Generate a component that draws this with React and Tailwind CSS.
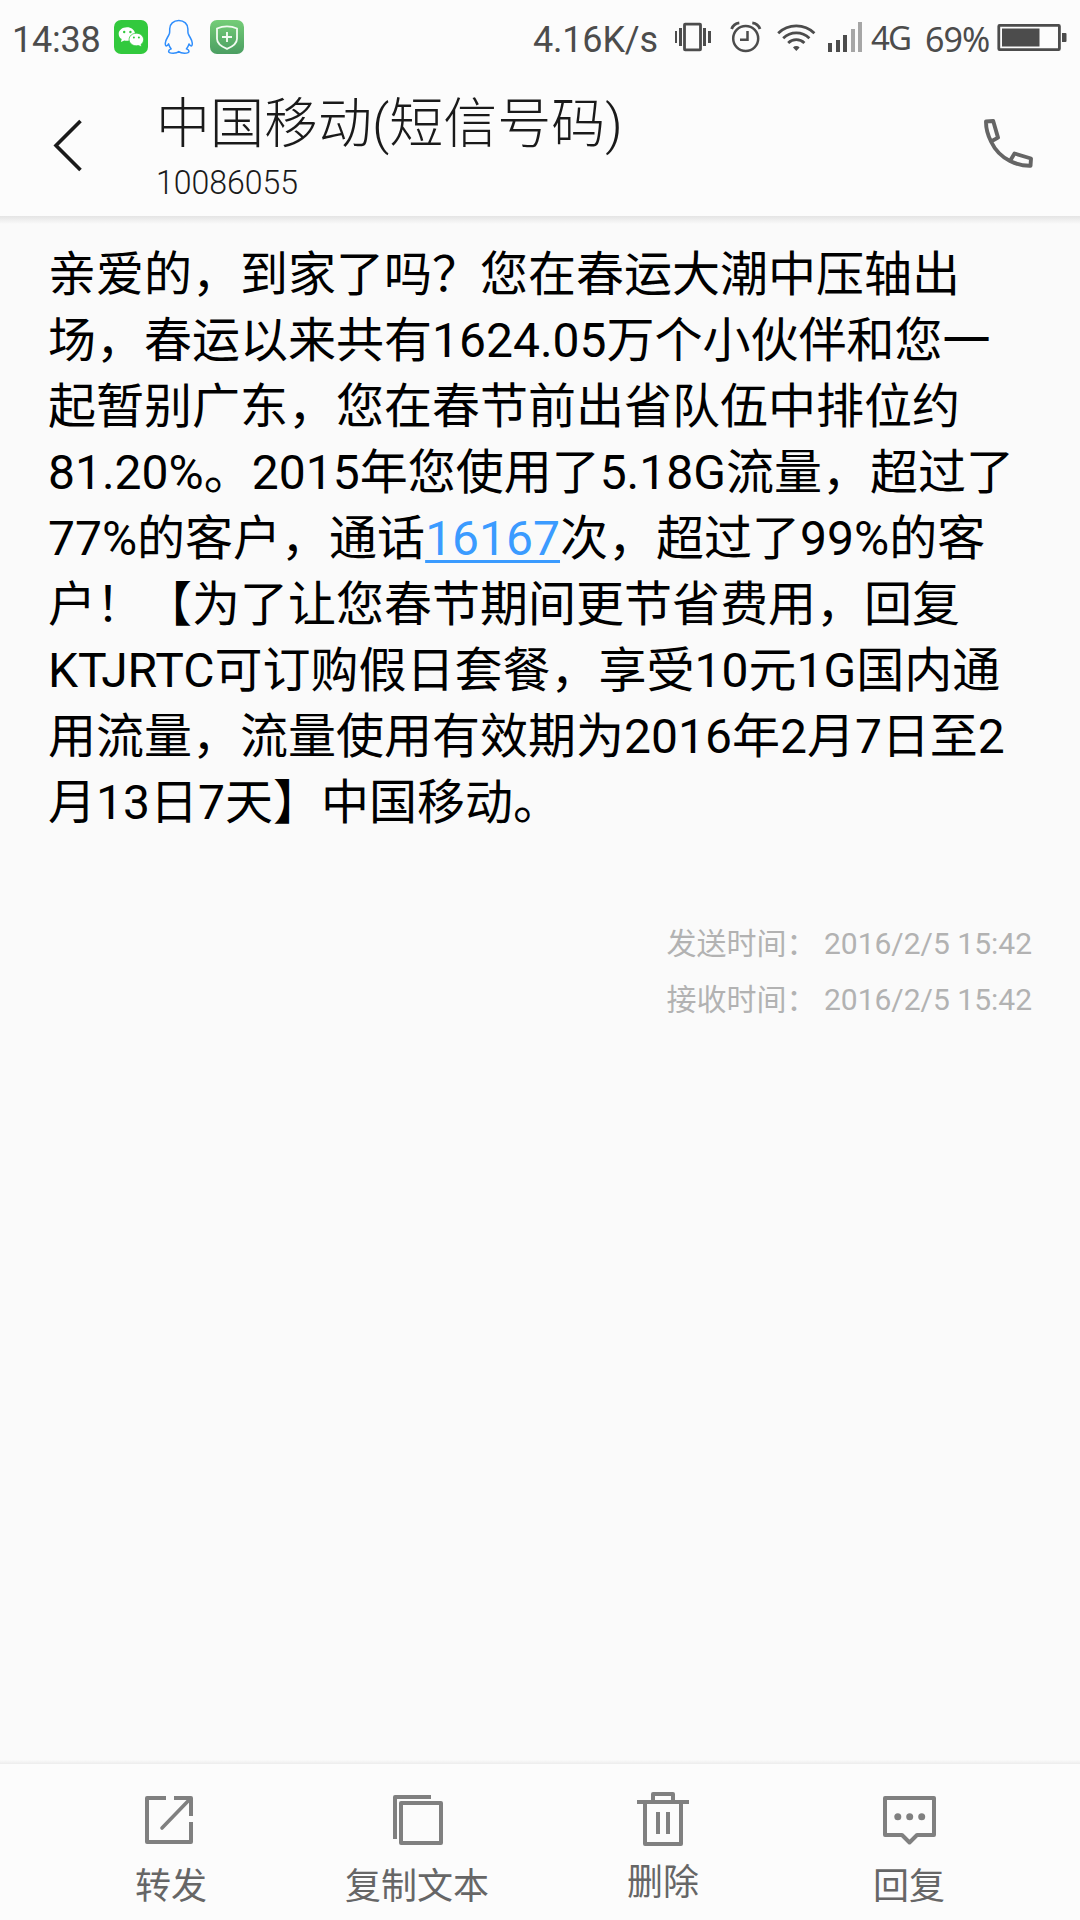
const messageLines = [
  ["亲爱的，到家了吗？您在春运大潮中压轴出"],
  ["场，春运以来共有1624.05万个小伙伴和您一"],
  ["起暂别广东，您在春节前出省队伍中排位约"],
  ["81.20%。2015年您使用了5.18G流量，超过了"],
  ["77%的客户，通话", "16167", "次，超过了99%的客"],
  ["户！【为了让您春节期间更节省费用，回复"],
  ["KTJRTC可订购假日套餐，享受10元1G国内通"],
  ["用流量，流量使用有效期为2016年2月7日至2"],
  ["月13日7天】中国移动。"],
];

function StatusBar() {
  return (
    <div className="flex h-[75px] shrink-0 items-start text-[36px] leading-[42px] text-[#4c4c4c]">
      <span className="ml-[12px] mt-[19px] w-[102px] whitespace-nowrap tracking-[-0.2px]">14:38</span>

      <svg className="mt-[20px] h-[34px] w-[34px]" viewBox="0 0 34 34">
        <rect width="34" height="34" rx="7" fill="#32c93d" />
        <path d="M13 7.2c-4.700 0-8.300 2.900-8.300 6.700 0 2.100 1.100 3.900 3 5.200l-.8 2.900 3.400-1.600c.9.200 1.800.3 2.700.3h1c1.200.8 7-5 7.100-7.200C20.600 9.900 17.200 7.200 13 7.200z" fill="#fff" />
        <path d="M22.300 13.200c-4 0-7.200 2.800-7.200 6.300s3.200 6.300 7.200 6.300c.8 0 1.500-.1 2.200-.3l3.200 1.600-.7-2.600c1.700-1.200 2.600-3 2.600-5 0-3.500-3.300-6.300-7.300-6.300z" fill="#fff" stroke="#32c93d" strokeWidth=".8" />
        <g fill="#32c93d">
          <circle cx="10.200" cy="12" r="1.200" />
          <circle cx="16.400" cy="12" r="1.200" />
          <circle cx="19.900" cy="17.600" r="1" />
          <circle cx="24.900" cy="17.600" r="1" />
        </g>
      </svg>

      <svg className="ml-[16px] mt-[19px] h-[36px] w-[30px]" viewBox="0 0 30 36" fill="none" stroke="#2f8efc" strokeWidth="1.500" strokeLinejoin="round">
        <path d="M14.800 1.600C9.500 1.600 5.700 5 5.700 10c0 1.600.1 3-.2 4.200C4.400 18 1.300 20.500 1.300 24.200c0 1.600.5 2.700 1.100 2.700 .7 0 1.500-.8 2.200-2 .5 2 1.400 3.600 2.600 5-1.500.5-2.600 1.300-2.600 2.300 0 1.500 2 2 4.600 2 2.400 0 4.500-.6 5.600-1.600 1.100 1 3.200 1.600 5.600 1.600 2.600 0 4.600-.5 4.600-2 0-1-1.100-1.800-2.600-2.300 1.200-1.400 2.100-3 2.600-5 .7 1.200 1.500 2 2.200 2 .6 0 1.100-1.100 1.100-2.700 0-3.700-3.100-6.200-4.200-10-.3-1.200-.2-2.600-.2-4.200 0-5-3.800-8.400-9.100-8.400z" />
      </svg>

      <svg className="ml-[16px] mt-[20px] h-[34px] w-[34px]" viewBox="0 0 34 34" fill="none">
        <defs>
          <linearGradient id="guard" x1="0" y1="0" x2="0" y2="1">
            <stop offset="0" stopColor="#74cd77" />
            <stop offset="1" stopColor="#4b9e62" />
          </linearGradient>
        </defs>
        <rect width="34" height="34" rx="7" fill="url(#guard)" />
        <path d="M17 6.300c3.400 0 7 .8 10 2.200v10.200c0 4.700-4 7.700-10 10.200-6-2.500-10-5.500-10-10.200V8.500c3-1.400 6.600-2.200 10-2.200z" stroke="#f2fbf2" strokeWidth="1.800" />
        <path d="M17 12v10M12 17h10" stroke="#f2fbf2" strokeWidth="1.900" />
      </svg>

      <span className="ml-[289px] mt-[19px] w-[141px] whitespace-nowrap tracking-[-0.2px]">4.16K/s</span>

      <svg className="mt-[22px] h-[30px] w-[38px]" viewBox="0 0 38 30" fill="#4c4c4c">
        <path d="M1 9h2v12H1zM5 6h3v18H5zM29 6h3v18h-3zM34 9h3v12h-3z" />
        <rect x="10.500" y="2.200" width="16" height="25.600" fill="none" stroke="#4c4c4c" strokeWidth="2.800" rx=".6" />
      </svg>

      <svg className="ml-[18px] mt-[21px] h-[32px] w-[32px]" viewBox="0 0 32 32" fill="none" stroke="#4c4c4c">
        <circle cx="15.700" cy="17.500" r="12.500" strokeWidth="2.500" />
        <path d="M17.500 10v8.800H10" strokeWidth="2.500" />
        <path d="M1.600 8C2.700 4.800 5.500 2.300 9.300 1.800M30 8C28.900 4.800 26.100 2.300 22.300 1.800" strokeWidth="2.800" />
      </svg>

      <svg className="ml-[15px] mr-[1px] mt-[22px] h-[30px] w-[40px]" viewBox="0 0 40 30" fill="none" stroke="#4c4c4c" strokeWidth="2.800">
        <path d="M1.200 11.200A26 26 0 0 1 37.400 11.200M6.200 16.200A19 19 0 0 1 32.400 16.200M11.200 21A11.500 11.500 0 0 1 27.400 21" />
        <path d="M16 25.500a4.500 4.500 0 0 1 6.600 0L19.300 29z" fill="#4c4c4c" stroke="none" />
      </svg>

      <svg className="ml-[10px] mt-[22px] h-[30px] w-[35px]" viewBox="0 0 35 30" fill="#4c4c4c">
        <path d="M0 21h4v9H0zM8 18h4v12H8zM15 13h4v17h-4z" />
        <path d="M23 7h4v23h-4zM30 0h4v30h-4z" fill="#a6a6a6" />
      </svg>

      <span className="ml-[8px] mt-[17px] w-[54px] whitespace-nowrap font-['Noto_Sans'] text-[33px] leading-[42px] tracking-[-2px]">4G</span>
      <span className="mt-[18px] w-[72px] whitespace-nowrap font-['Noto_Sans'] text-[34px] leading-[42px] tracking-[-1px]">69%</span>

      <svg className="mt-[24px] h-[27px] w-[70px]" viewBox="0 0 70 27" fill="#4c4c4c">
        <rect x="1.800" y="1.400" width="60.600" height="24.200" rx=".8" fill="none" stroke="#4c4c4c" strokeWidth="2.800" />
        <path d="M5 4.500h37.500v18H5z" />
        <path d="M65 9h3.500q1 0 1 1v7q0 1-1 1H65z" />
      </svg>
    </div>
  );
}

function Header() {
  return (
    <header className="flex h-[141px] shrink-0 items-start text-[#1a1a1a]">
      <svg className="ml-[52px] mt-[43px] h-[54px] w-[32px]" viewBox="0 0 32 54" fill="none" stroke="#1a1a1a" strokeWidth="3.600">
        <path d="M28.500 3L4 27.500 28.500 52" />
      </svg>
      <div className="ml-[72px] mt-[14px] flex-1 font-light">
        <h1 className="h-[71px] whitespace-nowrap text-[54px] leading-[72px] font-light">中国移动(短信号码)</h1>
        <p className="w-fit origin-left scale-x-[.942] text-[34px] leading-[44px] font-light">10086055</p>
      </div>
      <svg className="mr-[46px] mt-[43px] h-[51px] w-[51px]" viewBox="0 0 51 51" fill="none" stroke="#656565" strokeWidth="3.900" strokeLinejoin="round">
        <path d="M3 3.500L10.200 3 15 19.600 8 23.500C5 17.500 2.900 10.500 3 3.500zM8 23.500C12 32 18 38.500 27 43L31.500 35.500 48 40.500 47.500 47.800C40 48 33 46 27 43" />
      </svg>
    </header>
  );
}

function ForwardIcon() {
  return (
    <svg className="mr-[4px] h-[54px] w-[54px]" viewBox="0 0 54 54" fill="none" stroke="#808080" strokeWidth="4" strokeLinejoin="round">
      <path d="M24 6H5v44h44V30M32 6h17v18" />
      <path d="M48 7L20 36" strokeWidth="3.600" strokeLinecap="round" />
    </svg>
  );
}

function CopyIcon() {
  return (
    <svg className="ml-[2px] h-[54px] w-[54px]" viewBox="0 0 54 54" fill="none" stroke="#808080" strokeWidth="4" strokeLinejoin="round">
      <path d="M40 5H4v42" />
      <rect x="10" y="11" width="40" height="40" />
    </svg>
  );
}

function TrashIcon() {
  return (
    <svg className="h-[54px] w-[54px]" viewBox="0 0 54 54" fill="none" stroke="#808080" strokeWidth="4" strokeLinejoin="round">
      <path d="M1 10h52M17 10V2h20v8M9 10v42h36V10M22 20v22M32 20v22" />
    </svg>
  );
}

function ReplyIcon() {
  return (
    <svg className="h-[54px] w-[54px]" viewBox="0 0 54 54" fill="none" stroke="#808080" strokeWidth="4" strokeLinejoin="round">
      <path d="M3 6H52V43H35L27.500 50.500 20 43H3z" />
      <g fill="#808080" stroke="none">
        <circle cx="15.800" cy="24.700" r="3.500" />
        <circle cx="27.700" cy="24.700" r="3.500" />
        <circle cx="39.700" cy="24.700" r="3.500" />
      </g>
    </svg>
  );
}

const actions = [
  { label: "转发", Icon: ForwardIcon, gap: "mt-[16px]" },
  { label: "复制文本", Icon: CopyIcon, gap: "mt-[16px]" },
  { label: "删除", Icon: TrashIcon, gap: "mt-[12px]" },
  { label: "回复", Icon: ReplyIcon, gap: "mt-[16px]" },
];

export default function App() {
  return (
    <div
      lang="zh-CN"
      className="flex h-[1920px] w-[1080px] flex-col overflow-hidden bg-[#fafafa] font-[Roboto,'Noto_Sans_CJK_SC',sans-serif] [text-spacing-trim:space-all]"
    >
      <div className="shrink-0 bg-[#fcfcfc]">
        <StatusBar />
        <Header />
      </div>
      <div className="h-[8px] shrink-0 bg-linear-to-b from-[#e4e4e4] to-[#fafafa]" />

      <main className="flex-1 pl-[48px] pr-[48px] pt-[18px]">
        <div className="text-[48px] text-black">
          {messageLines.map(([before, link, after]) => (
            <p key={before} className="h-[66px] whitespace-nowrap leading-[66px]">
              {before}
              {link && (
                <a className="text-[#3b9bff] underline decoration-[3px] underline-offset-[5px]">{link}</a>
              )}
              {after}
            </p>
          ))}
        </div>
        <div className="mt-[80px] text-right text-[30px] leading-[56px] text-[#b2b2b2]">
          <p className="h-[56px]">发送时间： 2016/2/5 15:42</p>
          <p className="h-[56px]">接收时间： 2016/2/5 15:42</p>
        </div>
      </main>

      <div className="h-[4px] shrink-0 bg-linear-to-b from-[#fafafa] to-[#ececec]" />
      <nav className="grid h-[156px] shrink-0 grid-cols-4 bg-[#fcfcfc] px-[48px]">
        {actions.map(({ label, Icon, gap }) => (
          <button key={label} className="flex flex-col items-center justify-start pt-[28px]">
            <Icon />
            <span className={`${gap} whitespace-nowrap text-[36px] leading-[50px] text-[#666666]`}>{label}</span>
          </button>
        ))}
      </nav>
    </div>
  );
}
